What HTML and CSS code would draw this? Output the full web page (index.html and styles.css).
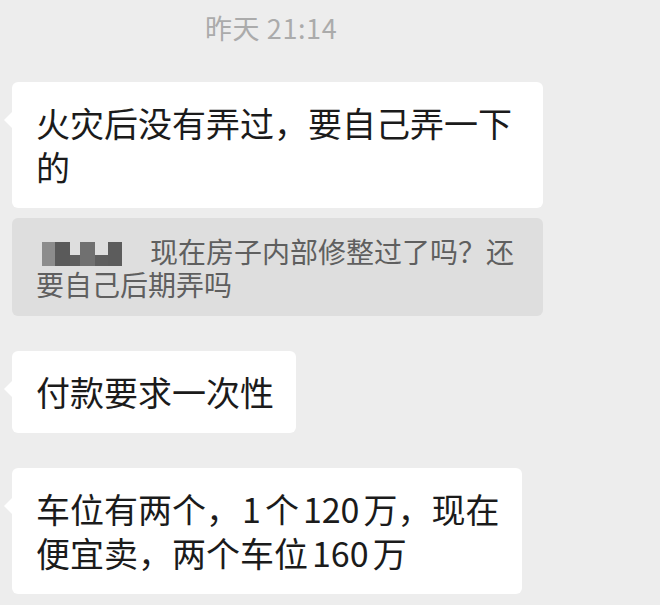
FILE: index.html
```html
<!DOCTYPE html>
<html lang="zh-CN">
<head>
<meta charset="utf-8">
<title>聊天记录</title>
<link rel="stylesheet" href="styles.css">
</head>
<body>
<div class="chat">
  <div class="time">昨天 21:14</div>
  <div class="bubble first">火灾后没有弄过，要自己弄一下的</div>
  <div class="quote"><span class="mosaic"><i class="m1"></i><i class="m2"></i><i class="m3"></i><i class="m4"></i><i class="m5"></i><i class="m6"></i></span>现在房子内部修整过了吗？还要自己后期弄吗</div>
  <div class="bubble gap">付款要求一次性</div>
  <div class="bubble gap">车位有两个，<span class="num first-num">1</span>个<span class="num">120</span>万，现在<br>便宜卖，两个车位<span class="num">160</span>万</div>
</div>
</body>
</html>
```

FILE: styles.css
```css
html, body {
  margin: 0;
  padding: 0;
  background: #ededed;
}

body {
  width: 660px;
  height: 605px;
  overflow: hidden;
  font-family: "Noto Sans CJK SC", "Noto Sans", sans-serif;
}

.chat {
  display: flex;
  flex-direction: column;
  align-items: flex-start;
  padding-left: 12px;
}

.time {
  height: 56px;
  line-height: 56px;
  font-size: 27px;
  letter-spacing: 0.6px;
  color: #ababab;
  padding-left: 193px;
  margin-bottom: 26px;
}

.bubble {
  position: relative;
  box-sizing: border-box;
  max-width: 531px;
  background: #ffffff;
  border-radius: 6px;
  padding: 19px 22px 19px 24px;
  font-size: 34px;
  line-height: 44px;
  color: #1b1b1b;
}

.bubble::before {
  content: "";
  position: absolute;
  left: -8px;
  top: 30px;
  border-top: 8px solid transparent;
  border-bottom: 8px solid transparent;
  border-right: 8px solid #ffffff;
}

.bubble.gap {
  margin-top: 35px;
}

.num {
  padding: 0 4px;
}

.num.first-num {
  padding-left: 2px;
}

.quote {
  box-sizing: border-box;
  width: 531px;
  margin-top: 10px;
  background: #dedede;
  border-radius: 6px;
  padding: 17px 22px 15px 24px;
  font-size: 28px;
  line-height: 33px;
  color: #5f5f5f;
}

.mosaic {
  display: inline-flex;
  vertical-align: -3px;
  height: 24px;
  margin-left: 6px;
  margin-right: 28px;
}

.mosaic i {
  display: block;
  height: 100%;
}

.m1 { width: 13px; background: #8c8c8c; }
.m2 { width: 15px; background: #5a5a5a; }
.m3 { width: 10px; background: linear-gradient(#dedede 0 54%, #5e5e5e 54%); }
.m4 { width: 15px; background: #707070; }
.m5 { width: 13px; background: linear-gradient(#dedede 0 54%, #5e5e5e 54%); }
.m6 { width: 14px; background: #5c5c5c; }
```
